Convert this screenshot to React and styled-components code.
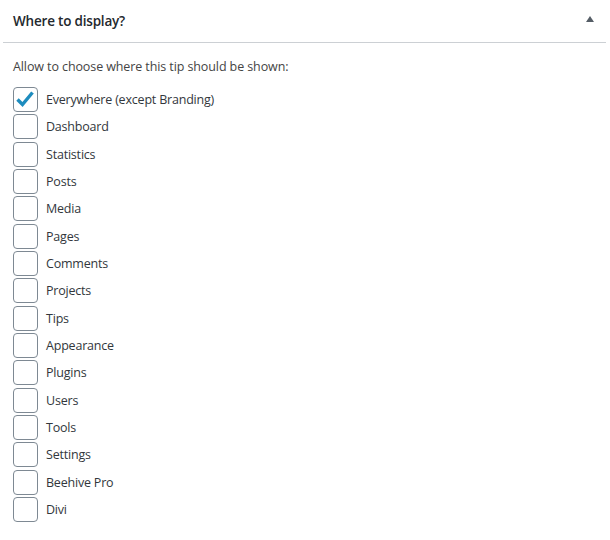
import React from 'react'
import styled, { createGlobalStyle } from 'styled-components'

const items = [
  'Everywhere (except Branding)',
  'Dashboard',
  'Statistics',
  'Posts',
  'Media',
  'Pages',
  'Comments',
  'Projects',
  'Tips',
  'Appearance',
  'Plugins',
  'Users',
  'Tools',
  'Settings',
  'Beehive Pro',
  'Divi'
]

export default function App () {
  return (
    <>
      <GlobalStyle />
      <Panel>
        <Header>
          <Title>Where to display?</Title>
          <Toggle>
            <svg width='8' height='6' viewBox='0 0 8 6'>
              <path d='M4 0L8 6H0z' fill='#555d66' />
            </svg>
          </Toggle>
        </Header>
        <Body>
          <Description>Allow to choose where this tip should be shown:</Description>
          <List>
            {items.map((label, i) => (
              <Row key={label}>
                <Box>
                  {i === 0 && (
                    <svg width='23' height='23' viewBox='0 0 23 23'>
                      <path d='M3.5 11.5l5 5 10-12' fill='none' stroke='#1e8cbe' strokeWidth='3.4' strokeLinejoin='miter' />
                    </svg>
                  )}
                </Box>
                <Label>{label}</Label>
              </Row>
            ))}
          </List>
        </Body>
      </Panel>
    </>
  )
}

const GlobalStyle = createGlobalStyle`
  body {
    margin: 0;
    background: #fff;
    font-family: "Open Sans", "Noto Sans", sans-serif;
  }
`

const Panel = styled.div`
  width: 610px;
  height: 540px;
  background: #fff;
`

const Header = styled.div`
  display: flex;
  align-items: center;
  justify-content: space-between;
  margin: 0 4px 0 3px;
  height: 42px;
  padding: 0 12px 0 10px;
  border-bottom: 1px solid #ccd0d4;
`

const Title = styled.h2`
  margin: 0;
  font-size: 13.5px;
  font-weight: 600;
  color: #23282d;
  letter-spacing: -0.2px;
`

const Toggle = styled.span`
  display: flex;
  margin-top: -4px;
`

const Body = styled.div`
  padding: 14px 13px 0;
`

const Description = styled.p`
  margin: 0 0 10px;
  font-size: 12.5px;
  color: #444;
  letter-spacing: -0.1px;
  line-height: 19px;
`

const List = styled.div`
  display: flex;
  flex-direction: column;
`

const Row = styled.label`
  display: flex;
  align-items: center;
  height: 27.33px;
`

const Box = styled.span`
  box-sizing: border-box;
  width: 25px;
  height: 25px;
  border: 1px solid #7e8993;
  border-radius: 4px;
  display: flex;
  align-items: center;
  justify-content: center;
  flex-shrink: 0;
`

const Label = styled.span`
  margin-left: 8px;
  font-size: 12.5px;
  color: #32373c;
  letter-spacing: -0.2px;
`
